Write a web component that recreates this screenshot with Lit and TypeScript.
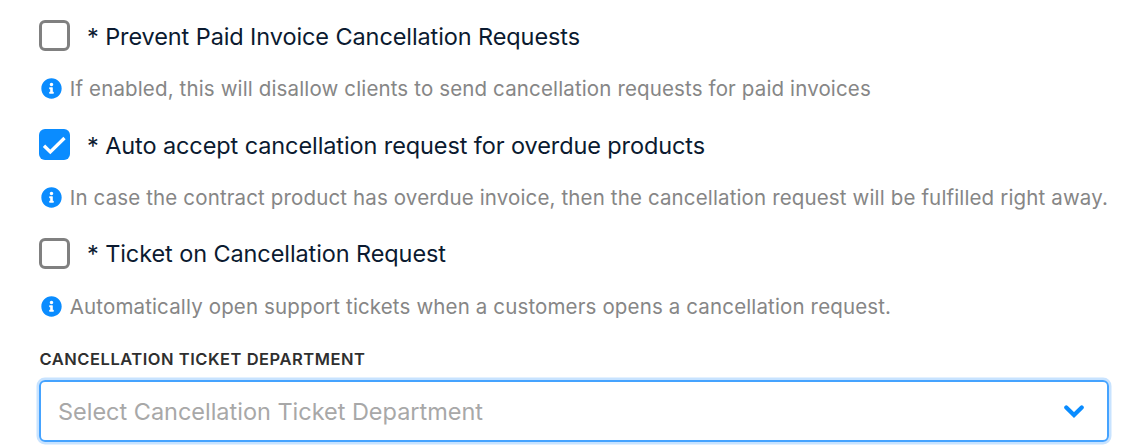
import { LitElement, html, css, svg, nothing } from "lit";
import { customElement, property } from "lit/decorators.js";

@customElement("option-row")
class OptionRow extends LitElement {
  @property({ type: Boolean }) checked = false;
  @property() label = "";
  @property() hint = "";

  static styles = css`
    :host { display: block; height: 108.8px; white-space: nowrap; }
    .option { display: flex; align-items: center; height: 31px; }
    .box {
      box-sizing: border-box; flex: none; width: 31px; height: 31px;
      border: 3px solid #808080; border-radius: 6px; background: #fff;
    }
    .box.on { border: 0; background: #0a8cff; }
    .box svg { display: block; width: 31px; height: 31px; }
    .label { margin-left: 17px; padding-top: 2.4px; font-size: 23.5px; line-height: 30px; letter-spacing: -0.1px; color: #0b1a30; }
    .help { display: flex; align-items: center; height: 26px; margin-top: 25px; padding-left: 2px; }
    .info { flex: none; width: 21px; height: 21px; margin-top: -1px; }
    .hint { margin-left: 7.8px; font-size: 20.5px; line-height: 26px; letter-spacing: 0.14px; color: #868686; }
  `;

  render() {
    return html`
      <div class="option">
        <span class="box ${this.checked ? "on" : ""}">
          ${this.checked
            ? html`<svg viewBox="0 0 31 31">${svg`<path d="M5 16.800 L11.300 23 L25.500 9" fill="none" stroke="#fff" stroke-width="3.300"/>`}</svg>`
            : nothing}
        </span>
        <span class="label">${this.label}</span>
      </div>
      <div class="help">
        <svg class="info" viewBox="0 0 512 512">
          <path fill="#0a8cff" fill-rule="evenodd" d="M256 8C119 8 8 119 8 256s111 248 248 248 248-111 248-248S393 8 256 8zm0 110c23.200 0 42 18.800 42 42s-18.800 42-42 42-42-18.800-42-42 18.800-42 42-42zm56 254c0 6.600-5.400 12-12 12h-88c-6.600 0-12-5.400-12-12v-24c0-6.600 5.400-12 12-12h12v-64h-12c-6.600 0-12-5.400-12-12v-24c0-6.600 5.400-12 12-12h64c6.600 0 12 5.400 12 12v100h12c6.600 0 12 5.400 12 12v24z"/>
        </svg>
        <span class="hint">${this.hint}</span>
      </div>
    `;
  }
}

@customElement("app-root")
class AppRoot extends LitElement {
  static styles = css`
    :host {
      display: block; box-sizing: border-box; width: 1122px; height: 448px; overflow: hidden;
      padding: 20px 13px 0 39px; background: #fff; font-family: Inter, sans-serif;
    }
    .caption { margin-top: 3px; height: 20px; padding-left: 0.5px; font-size: 16.5px; line-height: 21px; font-weight: 600; letter-spacing: 0.52px; color: #2f2f2f; white-space: nowrap; }
    .select {
      display: flex; align-items: center; justify-content: space-between; box-sizing: border-box;
      height: 62px; margin-top: 11px; padding: 0 23px 0 17px;
      border: 2px solid #45a3ff; border-radius: 6px; box-shadow: 0 0 0 2.500px #c8e3ff;
    }
    .placeholder { padding-top: 2px; font-size: 23.5px; line-height: 30px; letter-spacing: -0.02px; color: #a8a8a8; }
    .chevron { width: 20px; height: 14px; margin-top: 2px; }
  `;

  render() {
    return html`
      <option-row
        label="* Prevent Paid Invoice Cancellation Requests"
        hint="If enabled, this will disallow clients to send cancellation requests for paid invoices"></option-row>
      <option-row checked
        label="* Auto accept cancellation request for overdue products"
        hint="In case the contract product has overdue invoice, then the cancellation request will be fulfilled right away."></option-row>
      <option-row
        label="* Ticket on Cancellation Request"
        hint="Automatically open support tickets when a customers opens a cancellation request."></option-row>
      <div class="caption">CANCELLATION TICKET DEPARTMENT</div>
      <div class="select">
        <span class="placeholder">Select Cancellation Ticket Department</span>
        <svg class="chevron" viewBox="0 0 20 14">
          <path d="M2.300 2.500 L10 10 L17.700 2.500" fill="none" stroke="#0a8cff" stroke-width="4.200" stroke-linecap="round"/>
        </svg>
      </div>
    `;
  }
}
